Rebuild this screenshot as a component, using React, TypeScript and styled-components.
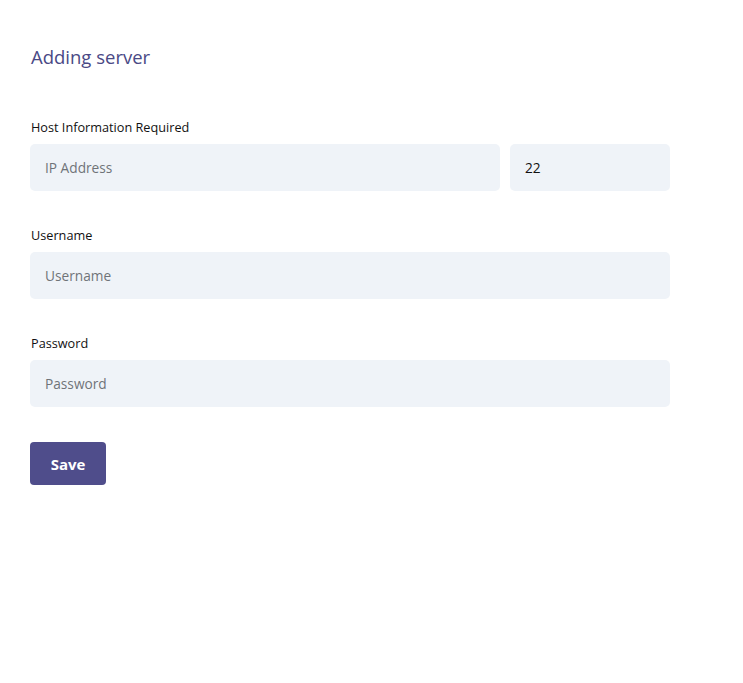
import React from "react";
import styled, { createGlobalStyle } from "styled-components";

const Global = createGlobalStyle`
  html, body { margin: 0; padding: 0; background: #fff; }
  body { font-family: "Open Sans", "Noto Sans", sans-serif; }
  * { box-sizing: border-box; }
`;

const Page = styled.div`
  padding: 44px 30px 30px 30px;
  width: 700px;
`;

const Title = styled.h1`
  margin: 0 0 49px 1px;
  font-size: 18.5px;
  font-weight: 400;
  line-height: 26px;
  color: #4a4985;
`;

const Form = styled.form`
  display: flex;
  flex-direction: column;
  gap: 36px;
  width: 640px;
`;

const Field = styled.div`
  display: flex;
  flex-direction: column;
  gap: 8px;
`;

const Label = styled.label`
  font-size: 12.7px;
  line-height: 17px;
  color: #111;
  padding-left: 1px;
`;

const Row = styled.div`
  display: flex;
  gap: 10px;
`;

const Input = styled.input<{ $w?: number }>`
  height: 47px;
  flex: ${(p) => (p.$w ? `0 0 ${p.$w}px` : "1 1 auto")};
  min-width: 0;
  border: none;
  border-radius: 5px;
  background: #eff3f8;
  padding: 0 15px;
  font-family: inherit;
  font-size: 13.7px;
  color: #111;
  outline: none;
  &::placeholder { color: #6f7378; }
`;

const SaveButton = styled.button`
  margin-top: -1px;
  align-self: flex-start;
  width: 76px;
  height: 43px;
  border: none;
  border-radius: 4px;
  background: #4f4d8b;
  color: #fff;
  font-family: inherit;
  font-weight: 700;
  font-size: 15px;
  cursor: pointer;
`;

export default function App() {
  return (
    <>
      <Global />
      <Page>
        <Title>Adding server</Title>
        <Form onSubmit={(e) => e.preventDefault()}>
          <Field>
            <Label>Host Information Required</Label>
            <Row>
              <Input placeholder="IP Address" />
              <Input $w={160} defaultValue="22" />
            </Row>
          </Field>
          <Field>
            <Label>Username</Label>
            <Input placeholder="Username" />
          </Field>
          <Field>
            <Label>Password</Label>
            <Input type="password" placeholder="Password" />
          </Field>
          <SaveButton type="submit">Save</SaveButton>
        </Form>
      </Page>
    </>
  );
}
